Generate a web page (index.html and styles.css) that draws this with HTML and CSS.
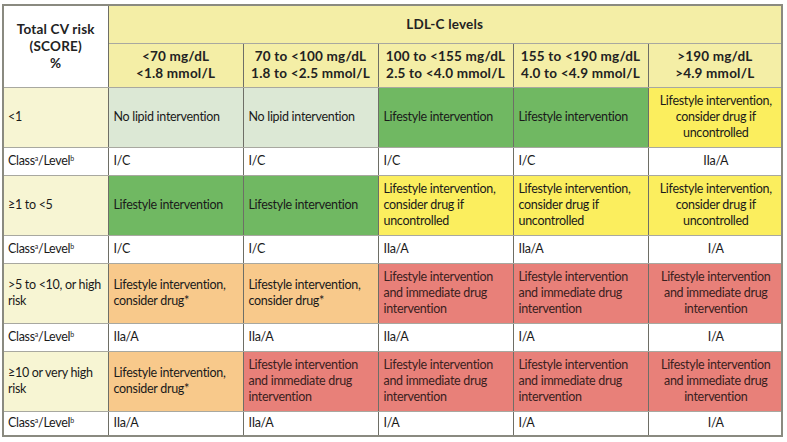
FILE: index.html
```html
<!DOCTYPE html>
<html>
<head>
<meta charset="utf-8">
<link rel="stylesheet" href="styles.css">
</head>
<body>
<table class="risk">
  <colgroup>
    <col class="c0"><col class="c1"><col class="c1"><col class="c1"><col class="c1"><col class="c5">
  </colgroup>
  <thead>
    <tr class="h1">
      <th rowspan="2" class="corner">Total CV risk<br>(SCORE)<br>%</th>
      <th colspan="5" class="hd">LDL-C levels</th>
    </tr>
    <tr class="h2">
      <th class="hd">&lt;70 mg/dL<br>&lt;1.8 mmol/L</th>
      <th class="hd">70 to &lt;100 mg/dL<br>1.8 to &lt;2.5 mmol/L</th>
      <th class="hd">100 to &lt;155 mg/dL<br>2.5 to &lt;4.0 mmol/L</th>
      <th class="hd">155 to &lt;190 mg/dL<br>4.0 to &lt;4.9 mmol/L</th>
      <th class="hd">&gt;190 mg/dL<br>&gt;4.9 mmol/L</th>
    </tr>
  </thead>
  <tbody>
    <tr class="main r1">
      <td class="risk-lbl">&lt;1</td>
      <td class="lg">No lipid intervention</td>
      <td class="lg">No lipid intervention</td>
      <td class="gr">Lifestyle intervention</td>
      <td class="gr">Lifestyle intervention</td>
      <td class="ye ctr">Lifestyle intervention,<br>consider drug if<br>uncontrolled</td>
    </tr>
    <tr class="cls r2">
      <td class="lbl">Class<sup>a</sup>/Level<sup>b</sup></td>
      <td>I/C</td><td>I/C</td><td>I/C</td><td>I/C</td><td class="ctr">IIa/A</td>
    </tr>
    <tr class="main r3">
      <td class="risk-lbl">≥1 to &lt;5</td>
      <td class="gr">Lifestyle intervention</td>
      <td class="gr">Lifestyle intervention</td>
      <td class="ye">Lifestyle intervention,<br>consider drug if<br>uncontrolled</td>
      <td class="ye">Lifestyle intervention,<br>consider drug if<br>uncontrolled</td>
      <td class="ye ctr">Lifestyle intervention,<br>consider drug if<br>uncontrolled</td>
    </tr>
    <tr class="cls r4">
      <td class="lbl">Class<sup>a</sup>/Level<sup>b</sup></td>
      <td>I/C</td><td>I/C</td><td>IIa/A</td><td>IIa/A</td><td class="ctr">I/A</td>
    </tr>
    <tr class="main r5">
      <td class="risk-lbl">&gt;5 to &lt;10, or high<br>risk</td>
      <td class="or">Lifestyle intervention,<br>consider drug*</td>
      <td class="or">Lifestyle intervention,<br>consider drug*</td>
      <td class="rd">Lifestyle intervention<br>and immediate drug<br>intervention</td>
      <td class="rd">Lifestyle intervention<br>and immediate drug<br>intervention</td>
      <td class="rd ctr">Lifestyle intervention<br>and immediate drug<br>intervention</td>
    </tr>
    <tr class="cls r6">
      <td class="lbl">Class<sup>a</sup>/Level<sup>b</sup></td>
      <td>IIa/A</td><td>IIa/A</td><td>IIa/A</td><td>I/A</td><td class="ctr">I/A</td>
    </tr>
    <tr class="main r7">
      <td class="risk-lbl">≥10 or very high<br>risk</td>
      <td class="or">Lifestyle intervention,<br>consider drug*</td>
      <td class="rd">Lifestyle intervention<br>and immediate drug<br>intervention</td>
      <td class="rd">Lifestyle intervention<br>and immediate drug<br>intervention</td>
      <td class="rd">Lifestyle intervention<br>and immediate drug<br>intervention</td>
      <td class="rd ctr">Lifestyle intervention<br>and immediate drug<br>intervention</td>
    </tr>
    <tr class="cls r8">
      <td class="lbl">Class<sup>a</sup>/Level<sup>b</sup></td>
      <td>IIa/A</td><td>IIa/A</td><td>I/A</td><td>I/A</td><td class="ctr">I/A</td>
    </tr>
  </tbody>
</table>
</body>
</html>
```

FILE: styles.css
```css
html, body {
  margin: 0;
  padding: 0;
  background: #ffffff;
}

body {
  padding: 4px 0 0 2px;
  font-family: "Lato", "Open Sans", sans-serif;
  color: #1a1a1a;
}

.risk {
  border-collapse: collapse;
  table-layout: fixed;
  width: 780px;
  border: 2px solid #8a8a80;
  font-size: 12.5px;
  line-height: 16px;
  letter-spacing: -0.3px;
}

.c0 { width: 105px; }
.c1 { width: 135px; }
.c5 { width: 134px; }

.risk th,
.risk td {
  padding: 0 3px 0 5px;
  border-left: 1px solid #6e6e66;
  border-right: 1px solid #6e6e66;
  border-top: 1px solid #a8a8a0;
  border-bottom: 1px solid #a8a8a0;
  vertical-align: middle;
  text-align: left;
  overflow: hidden;
  white-space: nowrap;
}

.risk th {
  font-weight: 700;
  text-align: center;
  font-size: 13.5px;
  line-height: 17px;
  color: #222;
  letter-spacing: 0.2px;
  padding: 0 2px;
}

.corner {
  background: #ffffff;
}

.hd {
  background: #f4eea6;
}

.h1 { height: 38px; }
.h2 { height: 44px; }
.main { height: 60px; }
.cls { height: 28px; }
.r8 { height: 25px; }

.risk-lbl {
  background: #f7f5d3;
  padding-left: 4px;
}

.risk .risk-lbl,
.risk .lbl {
  padding-left: 4px;
}

.lbl {
  background: #ffffff;
}

.lg { background: #dce8d5; }
.gr { background: #70b862; }
.ye { background: #fbee5e; }
.or { background: #f8c98b; }
.rd { background: #e88079; color: #3a2020; }

.ctr { text-align: center !important; }

sup {
  font-size: 7px;
  line-height: 0;
  vertical-align: 4px;
}
```
